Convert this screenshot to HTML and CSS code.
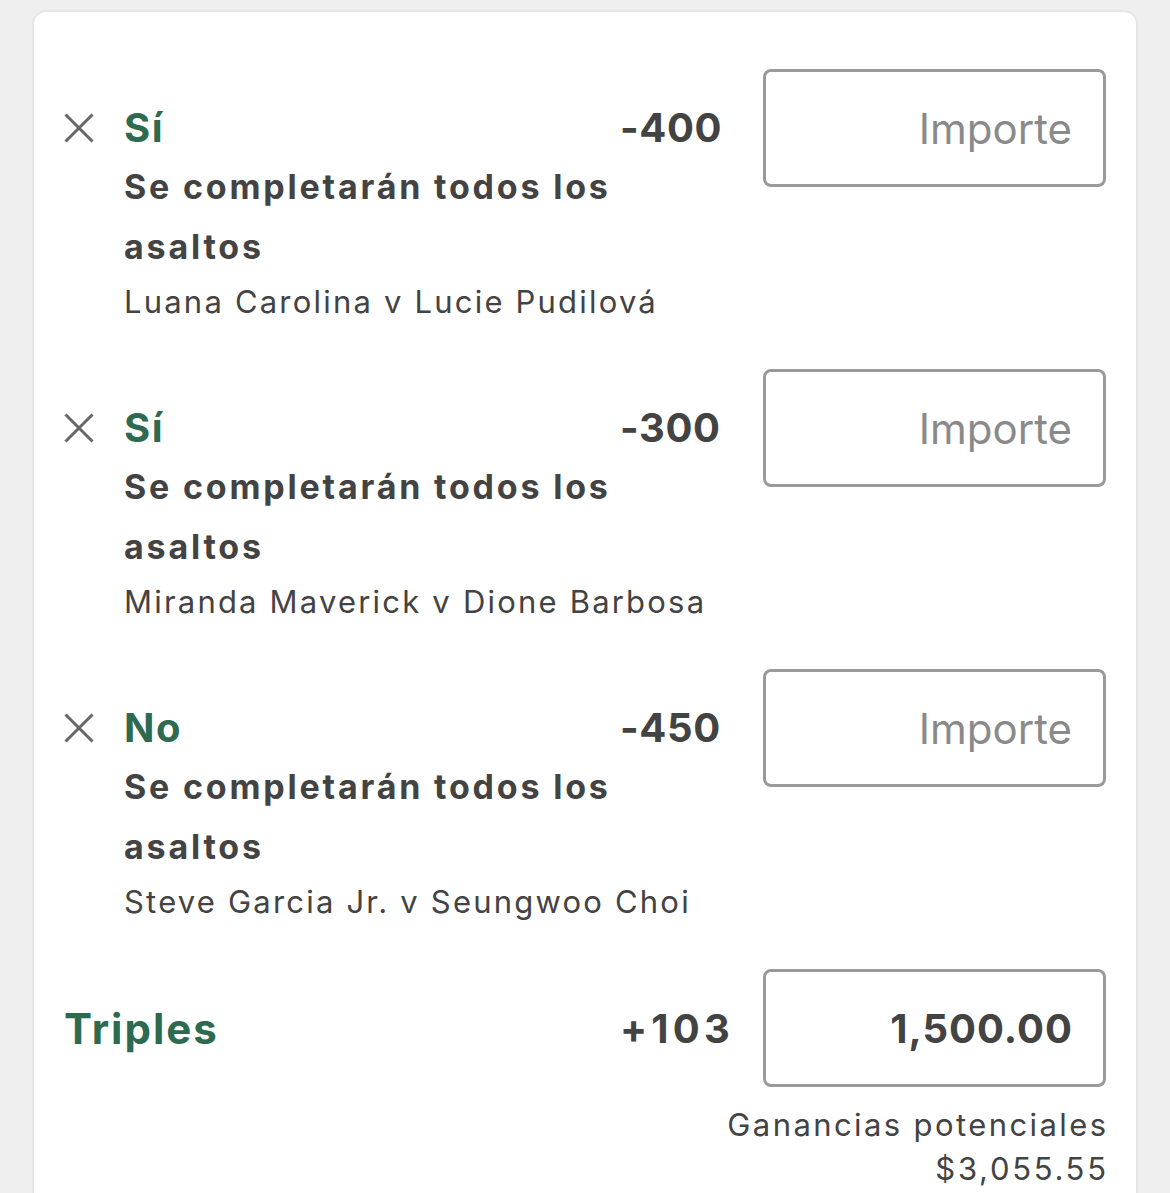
FILE: index.html
```html
<!DOCTYPE html>
<html lang="es">
<head>
<meta charset="utf-8">
<link rel="stylesheet" href="styles.css">
</head>
<body>
<div class="card">
  <div class="leg">
    <svg class="close" viewBox="0 0 30 30" width="30" height="30"><path d="M1.5 1.5 L28.5 28.5 M28.5 1.5 L1.5 28.5" stroke="#666" stroke-width="3" fill="none"/></svg>
    <div class="sel">Sí</div>
    <div class="odds">-400</div>
    <div class="stake"><span class="ph">Importe</span></div>
    <div class="market">Se completarán todos los asaltos</div>
    <div class="event">Luana Carolina v Lucie Pudilová</div>
  </div>
  <div class="leg">
    <svg class="close" viewBox="0 0 30 30" width="30" height="30"><path d="M1.5 1.5 L28.5 28.5 M28.5 1.5 L1.5 28.5" stroke="#666" stroke-width="3" fill="none"/></svg>
    <div class="sel">Sí</div>
    <div class="odds">-300</div>
    <div class="stake"><span class="ph">Importe</span></div>
    <div class="market">Se completarán todos los asaltos</div>
    <div class="event">Miranda Maverick v Dione Barbosa</div>
  </div>
  <div class="leg">
    <svg class="close" viewBox="0 0 30 30" width="30" height="30"><path d="M1.5 1.5 L28.5 28.5 M28.5 1.5 L1.5 28.5" stroke="#666" stroke-width="3" fill="none"/></svg>
    <div class="sel">No</div>
    <div class="odds">-450</div>
    <div class="stake"><span class="ph">Importe</span></div>
    <div class="market">Se completarán todos los asaltos</div>
    <div class="event">Steve Garcia Jr. v Seungwoo Choi</div>
  </div>
  <div class="multi">
    <div class="multi-name">Triples</div>
    <div class="multi-odds">+103</div>
    <div class="stake"><span class="val">1,500.00</span></div>
  </div>
  <div class="returns">
    <div class="returns-label">Ganancias potenciales</div>
    <div class="returns-value">$3,055.55</div>
  </div>
</div>
</body>
</html>
```

FILE: styles.css
```css
html, body {
  margin: 0;
  padding: 0;
  background: #efefef;
  font-family: Inter, "Liberation Sans", sans-serif;
  color: #434343;
  overflow: hidden;
}
.card {
  margin: 10px 0 0 32px;
  width: 1042px;
  height: 1300px;
  padding: 57px 30px 0 30px;
  background: #fff;
  border: 2px solid #e6e6e6;
  border-radius: 14px;
  box-sizing: content-box;
}
.leg {
  display: grid;
  grid-template-columns: 60px 496px 120px 23px 343px;
  grid-template-rows: auto auto auto;
  margin-bottom: 42px;
}
.close {
  grid-column: 1;
  grid-row: 1;
  align-self: center;
  margin-top: 30px;
  display: block;
}
.sel {
  grid-column: 2;
  grid-row: 1;
  margin-top: 30px;
  font-size: 40px;
  line-height: 58px;
  font-weight: 700;
  letter-spacing: 1.5px;
  color: #2d6a4f;
}
.odds {
  grid-column: 3;
  grid-row: 1;
  margin-top: 30px;
  font-size: 40px;
  line-height: 58px;
  font-weight: 700;
  letter-spacing: 0.6px;
}
.stake {
  grid-column: 5;
  grid-row: 1 / span 3;
  align-self: start;
  height: 118px;
  border: 3px solid #9a9a9a;
  border-radius: 8px;
  box-sizing: border-box;
  display: flex;
  align-items: center;
  justify-content: flex-end;
  padding-right: 31px;
}
.ph {
  font-size: 42px;
  color: #8a8a8a;
}
.val {
  font-size: 40px;
  font-weight: 700;
  letter-spacing: 1px;
  margin-right: -1px;
}
.market {
  grid-column: 2;
  grid-row: 2;
  font-size: 34px;
  line-height: 60px;
  font-weight: 700;
  letter-spacing: 2.8px;
}
.event {
  grid-column: 2 / span 3;
  grid-row: 3;
  font-size: 31px;
  line-height: 50px;
  letter-spacing: 2.2px;
  white-space: nowrap;
}
.multi {
  display: grid;
  grid-template-columns: 556px 120px 23px 343px;
  align-items: center;
}
.multi-name {
  font-size: 42px;
  font-weight: 700;
  letter-spacing: 2px;
  color: #2d6a4f;
}
.multi-odds {
  font-size: 40px;
  font-weight: 700;
  letter-spacing: 4.2px;
}
.multi .stake {
  grid-column: 4;
  grid-row: 1;
}
.returns {
  margin-top: 16px;
  text-align: right;
  font-size: 31px;
  line-height: 44px;
}
.returns-label {
  letter-spacing: 2.4px;
  margin-right: -2.4px;
}
.returns-value {
  letter-spacing: 2.7px;
  margin-right: -2.7px;
}
```
